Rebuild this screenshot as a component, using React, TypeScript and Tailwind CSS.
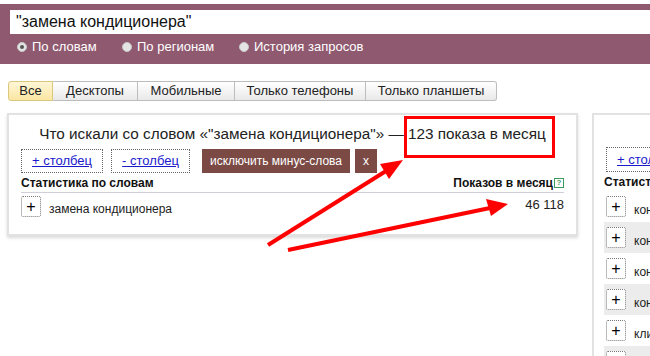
import React from 'react';

const tabs = ['Все', 'Десктопы', 'Мобильные', 'Только телефоны', 'Только планшеты'];
const sideRows = ['кон', 'кон', 'кон', 'кон', 'кли', 'кон'];

function Radio({ label, checked }: { label: string; checked?: boolean }) {
  return (
    <label className="flex items-center gap-[5px] text-[13px] text-white">
      <span className="w-[10px] h-[10px] rounded-full bg-[#e4e4e4] border border-[#c9c9c9] flex items-center justify-center">
        {checked && <span className="w-[4px] h-[4px] rounded-full bg-[#555]" />}
      </span>
      {label}
    </label>
  );
}

function PlusBox() {
  return (
    <span className="w-[20px] h-[21px] border border-dotted border-[#777] rounded-[2px] flex items-center justify-center text-[16px] leading-none text-black bg-white">
      +
    </span>
  );
}

export default function App() {
  return (
    <div className="relative w-[650px] h-[356px] overflow-hidden bg-white" style={{ fontFamily: '"Liberation Sans", Arial, sans-serif' }}>
      {/* === Header === */}
      <div className="mt-[4px] bg-[#8f596f] h-[60px] pt-[6px]">
        <div className="ml-[10px] h-[24px] bg-white flex items-center pl-[6px] text-[16px] text-[#111]">
          "замена кондиционера"
        </div>
        <div className="flex items-center mt-[3px] ml-[17px]">
          <div className="w-[105px]"><Radio label="По словам" checked /></div>
          <div className="w-[117px]"><Radio label="По регионам" /></div>
          <Radio label="История запросов" />
        </div>
      </div>

      {/* === Tabs === */}
      <div className="flex ml-[8px] mt-[17px] h-[20px]">
        {tabs.map((t, i) => (
          <div
            key={t}
            className={`h-[20px] flex items-center justify-center text-[13px] text-[#222] border-y border-r border-[#bdbdbd] ${
              i === 0
                ? 'border-l border-[#d9c77e] bg-gradient-to-b from-[#fff6d6] to-[#fbe6a2] rounded-l-[3px] w-[45px]'
                : 'bg-gradient-to-b from-white to-[#e9e9e9]'
            } ${i === 1 ? 'w-[85px]' : ''} ${i === 2 ? 'w-[97px]' : ''} ${i === 3 ? 'w-[131px]' : ''} ${i === 4 ? 'w-[131px] rounded-r-[3px]' : ''}`}
          >
            {t}
          </div>
        ))}
      </div>

      {/* === Cards === */}
      <div className="flex gap-[14px] ml-[7px] mt-[12px] items-start">
        <div className="w-[571px] h-[123px] shrink-0 border-2 border-[#e2e2e2] shadow-[0_2px_3px_rgba(0,0,0,0.15)] px-[12px]">
          <div className="text-center text-[15.3px] text-[#222] pt-[10px] leading-[18px]">
            Что искали со словом «"замена кондиционера"» — 123 показа в месяц
          </div>
          <div className="flex items-center mt-[6px] h-[24px]">
            <span className="h-[24px] w-[82px] border border-dotted border-[#666] flex items-center justify-center text-[13px] text-[#1a1acc] underline">+ столбец</span>
            <span className="h-[24px] w-[79px] ml-[8px] border border-dotted border-[#666] flex items-center justify-center text-[13px] text-[#1a1acc] underline">- столбец</span>
            <span className="h-[24px] w-[148px] ml-[12px] bg-[#7b4a45] flex items-center justify-center text-[12px] text-white">исключить минус-слова</span>
            <span className="h-[24px] w-[22px] ml-[5px] bg-[#7b4a45] flex items-center justify-center text-[12px] text-white">x</span>
          </div>
          <div className="flex justify-between items-end mt-[3px] pb-[2px] border-b border-[#cfcfdc] text-[12px] font-bold text-[#111] leading-[14px]">
            <span>Статистика по словам</span>
            <span className="flex items-center gap-[1px]">
              Показов в месяц
              <span className="w-[10px] h-[10px] border border-[#3c9a5a] text-[#3c9a5a] text-[8px] leading-none flex items-center justify-center font-bold">?</span>
            </span>
          </div>
          <div className="flex items-start mt-[3px]">
            <PlusBox />
            <span className="ml-[8px] mt-[4px] text-[12px] text-[#222]">замена кондиционера</span>
            <span className="ml-auto -mt-[1px] text-[13px] text-[#222]">46 118</span>
          </div>
        </div>

        <div className="w-[300px] h-[260px] shrink-0 border-2 border-[#e2e2e2] pl-[10px]">
          <div className="mt-[32px] h-[25px] w-[90px] ml-[2px] border border-dotted border-[#666] flex items-center pl-[10px] text-[13px] text-[#1a1acc] underline">+ столбец</div>
          <div className="mt-[3px] text-[12px] font-bold text-[#111] leading-[14px] pb-[2px]">Статистика по словам</div>
          <div className="flex flex-col">
            {sideRows.map((r, i) => (
              <div key={i} className={`h-[31px] flex items-center pl-[2px] ${i % 2 === 1 ? 'bg-[#ececec]' : ''}`}>
                <PlusBox />
                <span className="ml-[8px] mt-[6px] text-[12px] text-[#222]">{r}диционер</span>
              </div>
            ))}
          </div>
        </div>
      </div>

      {/* === Annotations === */}
      <div className="absolute left-[404px] top-[116px] w-[151px] h-[42px] border-[3px] border-[#ff0000]" />
      <svg className="absolute inset-0 pointer-events-none" width="650" height="356">
        <line x1="268" y1="245" x2="386" y2="171" stroke="#ff0000" strokeWidth="4" />
        <polygon points="403,160 389,179 380,164" fill="#ff0000" />
        <line x1="288" y1="250" x2="490" y2="208" stroke="#ff0000" strokeWidth="4" />
        <polygon points="508,204 491,216 486,199" fill="#ff0000" />
      </svg>
    </div>
  );
}
